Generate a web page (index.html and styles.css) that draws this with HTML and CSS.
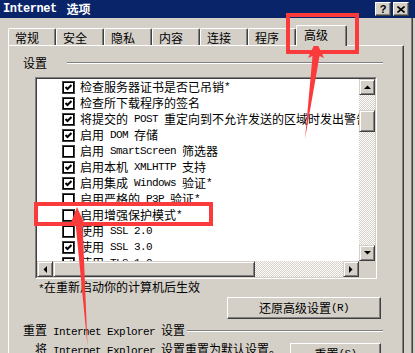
FILE: index.html
```html
<!DOCTYPE html>
<html lang="zh-CN">
<head>
    <meta charset="UTF-8">
    <title>Internet 选项</title>
    <link rel="stylesheet" href="styles.css">
</head>
<body>
    <!-- 标题栏 -->
    <div class="titlebar">
        <div class="title"><span class="en">Internet</span><span>选项</span></div>
        <div class="caption-buttons">
            <div class="cap-btn">?</div>
            <div class="cap-btn">
                <svg width="8" height="7" viewBox="0 0 8 7"><path d="M0.5 0.5 L7.5 6.5 M7.5 0.5 L0.5 6.5" stroke="#000" stroke-width="1.6"/></svg>
            </div>
        </div>
    </div>

    <div class="window">
        <!-- 选项卡 -->
        <div class="tabs">
            <div class="tab">常规</div>
            <div class="tab">安全</div>
            <div class="tab">隐私</div>
            <div class="tab">内容</div>
            <div class="tab">连接</div>
            <div class="tab">程序</div>
            <div class="tab active">高级</div>
        </div>

        <div class="panel">
            <div class="group-title">
                <span>设置</span>
                <div class="etched first"></div>
            </div>

            <div class="listbox">
                <div class="list-inner">
                    <div class="viewport">
                        <div class="item"><span class="check on"></span>检查服务器证书是否已吊销<span class="en">*</span></div>
                        <div class="item"><span class="check on"></span>检查所下载程序的签名</div>
                        <div class="item"><span class="check on"></span>将提交的<span class="en"> POST </span>重定向到不允许发送的区域时发出警告</div>
                        <div class="item"><span class="check on"></span>启用<span class="en"> DOM </span>存储</div>
                        <div class="item"><span class="check"></span>启用<span class="en"> SmartScreen </span>筛选器</div>
                        <div class="item"><span class="check on"></span>启用本机<span class="en"> XMLHTTP </span>支持</div>
                        <div class="item"><span class="check on"></span>启用集成<span class="en"> Windows </span>验证<span class="en">*</span></div>
                        <div class="item"><span class="check"></span>启用严格的<span class="en"> P3P </span>验证<span class="en">*</span></div>
                        <div class="item"><span class="check"></span>启用增强保护模式<span class="en">*</span></div>
                        <div class="item"><span class="check"></span>使用<span class="en"> SSL 2.0</span></div>
                        <div class="item"><span class="check on"></span>使用<span class="en"> SSL 3.0</span></div>
                        <div class="item"><span class="check on"></span>使用<span class="en"> TLS 1.0</span></div>
                    </div>
                    <div class="vscroll">
                        <div class="sb-btn"><svg width="7" height="4"><polygon points="0,4 7,4 3.5,0.5"/></svg></div>
                        <div class="track"><div class="thumb v"></div></div>
                        <div class="sb-btn"><svg width="7" height="4"><polygon points="0,0 7,0 3.5,3.5"/></svg></div>
                    </div>
                    <div class="hscroll">
                        <div class="sb-btn"><svg width="4" height="7"><polygon points="4,0 4,7 0.5,3.5"/></svg></div>
                        <div class="track"><div class="thumb h"></div></div>
                        <div class="sb-btn"><svg width="4" height="7"><polygon points="0,0 0,7 3.5,3.5"/></svg></div>
                    </div>
                    <div class="corner"></div>
                </div>
            </div>

            <div class="note"><span class="en">*</span>在重新启动你的计算机后生效</div>

            <div class="btn-row">
                <div class="btn restore">还原高级设置<span class="en">(R)</span></div>
            </div>

            <div class="group-title second">
                <span>重置<span class="en"> Internet Explorer </span>设置</span>
                <div class="etched"></div>
            </div>

            <div class="reset-row">
                <div>将<span class="en"> Internet Explorer </span>设置重置为默认设置。</div>
                <div class="btn reset">重置<span class="en">(S)</span></div>
            </div>
        </div>
    </div>

    <!-- 红色标注 -->
    <svg class="marks" width="415" height="353" viewBox="0 0 415 353">
        <rect x="288" y="15" width="69" height="37" fill="none" stroke="#fb3b3b" stroke-width="4"/>
        <polygon points="316,41 324,58 319.5,56 305,139 312.5,56 308,58" fill="#fb3b3b"/>
        <rect x="36" y="204" width="175" height="20" fill="none" stroke="#fb3b3b" stroke-width="4"/>
        <polygon points="77,207 85,225 82.5,223 87.5,346 75.5,223 70,225" fill="#fb3b3b"/>
    </svg>
</body>
</html>
```

FILE: styles.css
```css
* {
    box-sizing: border-box;
}
body {
    margin: 0;
    width: 415px;
    height: 353px;
    overflow: hidden;
    position: relative;
    background-color: #d4d0c8;
    font-family: "Noto Sans CJK SC", sans-serif;
    font-size: 12px;
    line-height: 12px;
    color: #000;
}
.en {
    font-family: "Liberation Mono", monospace;
    font-size: 11px;
    letter-spacing: -0.6px;
    white-space: pre;
}
.titlebar {
    height: 18px;
    background-color: #0a246a;
    display: flex;
    align-items: center;
    justify-content: space-between;
    padding: 0 6px 0 3px;
}
.title {
    display: flex;
    align-items: center;
    gap: 10px;
    color: #fff;
    font-weight: bold;
}
.title .en {
    font-size: 12px;
    letter-spacing: -0.5px;
}
.caption-buttons {
    display: flex;
    gap: 2px;
}
.cap-btn {
    width: 16px;
    height: 14px;
    display: flex;
    align-items: center;
    justify-content: center;
    background-color: #d4d0c8;
    border: 1px solid;
    border-color: #fff #404040 #404040 #fff;
    box-shadow: inset -1px -1px #808080;
    font: bold 11px "Liberation Sans", sans-serif;
}
.window {
    width: 413px;
    height: 335px;
    padding: 7px 0 0 8px;
    border-right: 1px solid #404040;
    box-shadow: inset -1px 0 #808080;
}
.tabs {
    display: flex;
    align-items: flex-end;
    height: 20px;
}
.tab {
    width: 48px;
    height: 17px;
    padding: 3px 0 0 6px;
    border-top: 1px solid #fff;
    border-left: 1px solid #fff;
    border-right: 1px solid #404040;
    border-radius: 2px 2px 0 0;
    box-shadow: inset -1px 0 #808080;
}
.tab.active {
    width: 51px;
    height: 21px;
    padding-left: 7px;
    margin-bottom: -1px;
    position: relative;
    z-index: 1;
    background-color: #d4d0c8;
}
.panel {
    width: 396px;
    height: 308px;
    border-top: 1px solid #fff;
    border-left: 1px solid #fff;
    border-right: 1px solid #404040;
    box-shadow: inset -1px 0 #808080;
}
.group-title {
    display: flex;
    align-items: center;
    height: 12px;
    margin: 11px 20px 0 14px;
    white-space: nowrap;
}
.etched {
    flex: 1;
    height: 2px;
    margin-left: 2px;
    border-top: 1px solid #808080;
    border-bottom: 1px solid #fff;
}
.etched.first {
    margin-left: 20px;
}
.group-title.second {
    margin-top: 6px;
}
.listbox {
    width: 342px;
    height: 202px;
    margin: 8px 0 0 26px;
    border: 1px solid;
    border-color: #808080 #fff #fff #808080;
}
.list-inner {
    height: 100%;
    border: 1px solid;
    border-color: #404040 #d4d0c8 #d4d0c8 #404040;
    background-color: #fff;
    display: grid;
    grid-template-columns: 1fr 16px;
    grid-template-rows: 1fr 16px;
}
.viewport {
    overflow: hidden;
}
.item {
    height: 16px;
    display: flex;
    align-items: center;
    white-space: nowrap;
}
.check {
    flex: none;
    width: 13px;
    height: 13px;
    margin: 0 5px 0 25px;
    border: 1px solid #404040;
    box-shadow: inset 0 0 0 1px #000;
    background-color: #fff;
}
.check.on {
    background: #fff url("data:image/svg+xml;utf8,<svg xmlns='http://www.w3.org/2000/svg' width='11' height='11'><path d='M2.5 5 L4.5 7 L8.5 3' fill='none' stroke='black' stroke-width='2'/></svg>") center no-repeat;
}
.vscroll {
    display: flex;
    flex-direction: column;
}
.hscroll {
    display: flex;
}
.sb-btn, .thumb {
    flex: none;
    width: 16px;
    height: 16px;
    display: flex;
    align-items: center;
    justify-content: center;
    background-color: #d4d0c8;
    border: 1px solid;
    border-color: #d4d0c8 #404040 #404040 #d4d0c8;
    box-shadow: inset 1px 1px #fff, inset -1px -1px #808080;
}
.track {
    flex: 1;
    display: flex;
    background: repeating-conic-gradient(#d4d0c8 0 25%, #fff 0 50%) 0 0 / 2px 2px;
}
.vscroll .track {
    flex-direction: column;
}
.thumb.v {
    height: 22px;
    margin-top: 15px;
}
.thumb.h {
    width: 202px;
}
.corner {
    background-color: #d4d0c8;
}
.note {
    margin: 2px 0 0 29px;
}
.btn-row {
    display: flex;
    justify-content: flex-end;
    margin-top: 2px;
    padding-right: 22px;
}
.btn {
    height: 22px;
    display: flex;
    align-items: center;
    justify-content: center;
    background-color: #d4d0c8;
    border: 1px solid;
    border-color: #fff #404040 #404040 #fff;
    box-shadow: inset -1px -1px #808080;
    white-space: nowrap;
}
.btn.restore {
    width: 154px;
}
.btn.reset {
    width: 91px;
}
.reset-row {
    display: flex;
    justify-content: space-between;
    align-items: flex-start;
    margin-top: 6px;
    padding: 0 22px 0 26px;
    white-space: nowrap;
}
.marks {
    position: absolute;
    top: 0;
    left: 0;
    pointer-events: none;
}
```
